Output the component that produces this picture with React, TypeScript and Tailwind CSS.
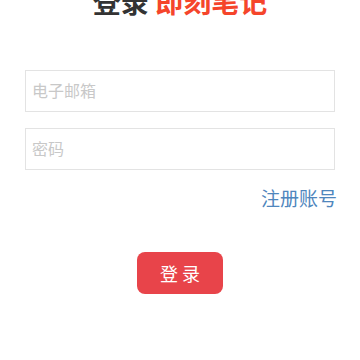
import React from "react";

export default function App() {
  return (
    <div
      className="w-[360px] h-[360px] bg-white overflow-hidden flex flex-col px-[25px]"
      style={{ fontFamily: '"Noto Sans CJK SC", "Noto Sans", sans-serif' }}
    >
      <h1 className="mt-[-13px] text-[28px] leading-none font-bold text-center whitespace-nowrap">
        <span className="text-[#333333]">登录</span>{" "}
        <span className="text-[#f5452b]">即刻笔记</span>
      </h1>
      <input
        className="mt-[55px] h-[42px] w-full border border-[#e3e3e3] px-[6px] pb-[3px] text-[16px] outline-none placeholder:text-[#c8c8c8]"
        placeholder="电子邮箱"
      />
      <input
        type="password"
        className="mt-[16px] h-[42px] w-full border border-[#e3e3e3] px-[6px] pb-[3px] text-[16px] outline-none placeholder:text-[#c8c8c8]"
        placeholder="密码"
      />
      <div className="mt-[18px] flex justify-end mr-[-2px]">
        <span className="text-[19px] leading-none text-[#4f86bd]">注册账号</span>
      </div>
      <div className="mt-[45px] flex justify-center">
        <button className="w-[86px] h-[42px] rounded-[8px] bg-[#e8444a] text-white text-[18px] leading-none">
          登 录
        </button>
      </div>
    </div>
  );
}
